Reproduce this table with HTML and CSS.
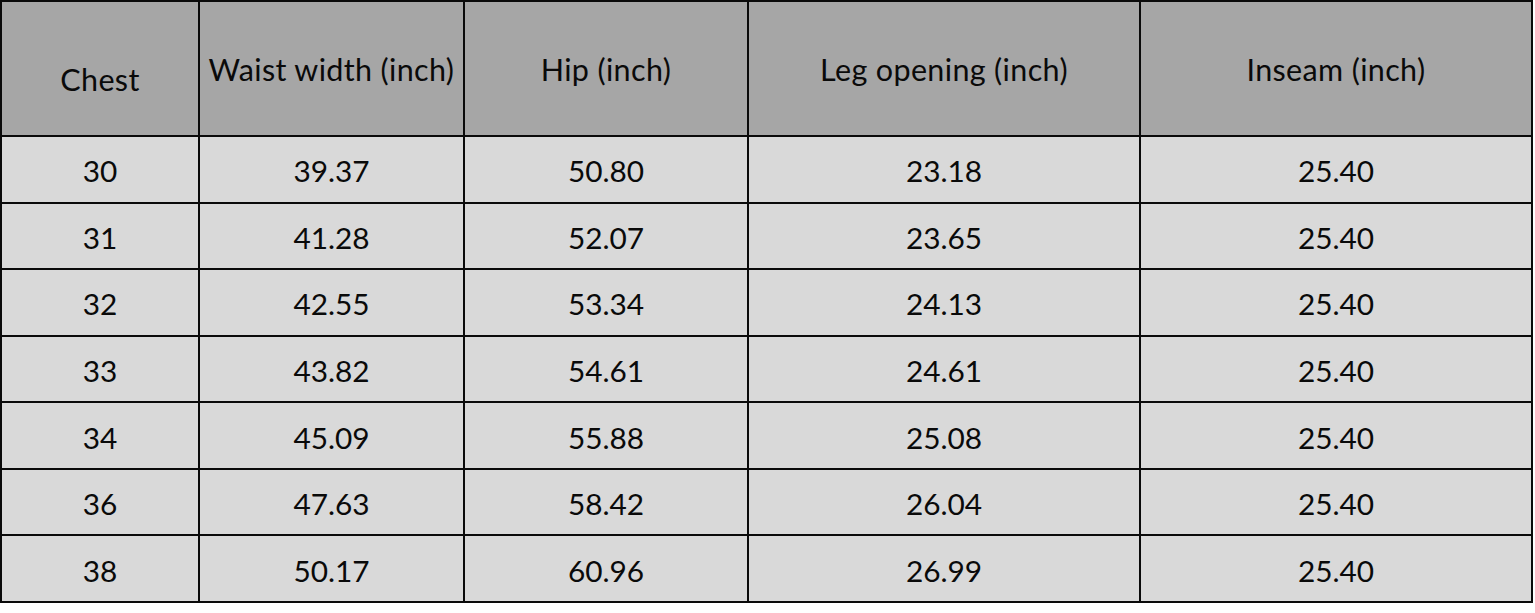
FILE: index.html
```html
<!DOCTYPE html>
<html lang="en">
<head>
<meta charset="utf-8">
<title>Size chart</title>
<link rel="stylesheet" href="styles.css">
</head>
<body>
<div class="chart">
  <div class="cell head chest">Chest</div>
  <div class="cell head">Waist width (inch)</div>
  <div class="cell head">Hip (inch)</div>
  <div class="cell head">Leg opening (inch)</div>
  <div class="cell head">Inseam (inch)</div>

  <div class="cell">30</div><div class="cell">39.37</div><div class="cell">50.80</div><div class="cell">23.18</div><div class="cell">25.40</div>
  <div class="cell">31</div><div class="cell">41.28</div><div class="cell">52.07</div><div class="cell">23.65</div><div class="cell">25.40</div>
  <div class="cell">32</div><div class="cell">42.55</div><div class="cell">53.34</div><div class="cell">24.13</div><div class="cell">25.40</div>
  <div class="cell">33</div><div class="cell">43.82</div><div class="cell">54.61</div><div class="cell">24.61</div><div class="cell">25.40</div>
  <div class="cell">34</div><div class="cell">45.09</div><div class="cell">55.88</div><div class="cell">25.08</div><div class="cell">25.40</div>
  <div class="cell">36</div><div class="cell">47.63</div><div class="cell">58.42</div><div class="cell">26.04</div><div class="cell">25.40</div>
  <div class="cell">38</div><div class="cell">50.17</div><div class="cell">60.96</div><div class="cell">26.99</div><div class="cell">25.40</div>
</div>
</body>
</html>
```

FILE: styles.css
```css
html, body {
  margin: 0;
  padding: 0;
  background: #ffffff;
}

.chart {
  display: grid;
  grid-template-columns: 196px 263px 282px 390px 390px;
  grid-template-rows: 133px repeat(7, 64.57px);
  gap: 2px;
  padding: 2px;
  width: max-content;
  background: #0a0a0a;
  font-family: Lato, "Noto Sans", sans-serif;
  font-size: 29.8px;
  color: #0a0a0a;
}

.cell {
  background: #d9d9d9;
  display: flex;
  align-items: center;
  justify-content: center;
  padding-top: 3px;
  box-sizing: border-box;
  white-space: nowrap;
}

.head {
  background: #a6a6a6;
  font-size: 30.5px;
  letter-spacing: 0.35px;
  padding-top: 1px;
}

.head.chest {
  padding-top: 20px;
}
```
